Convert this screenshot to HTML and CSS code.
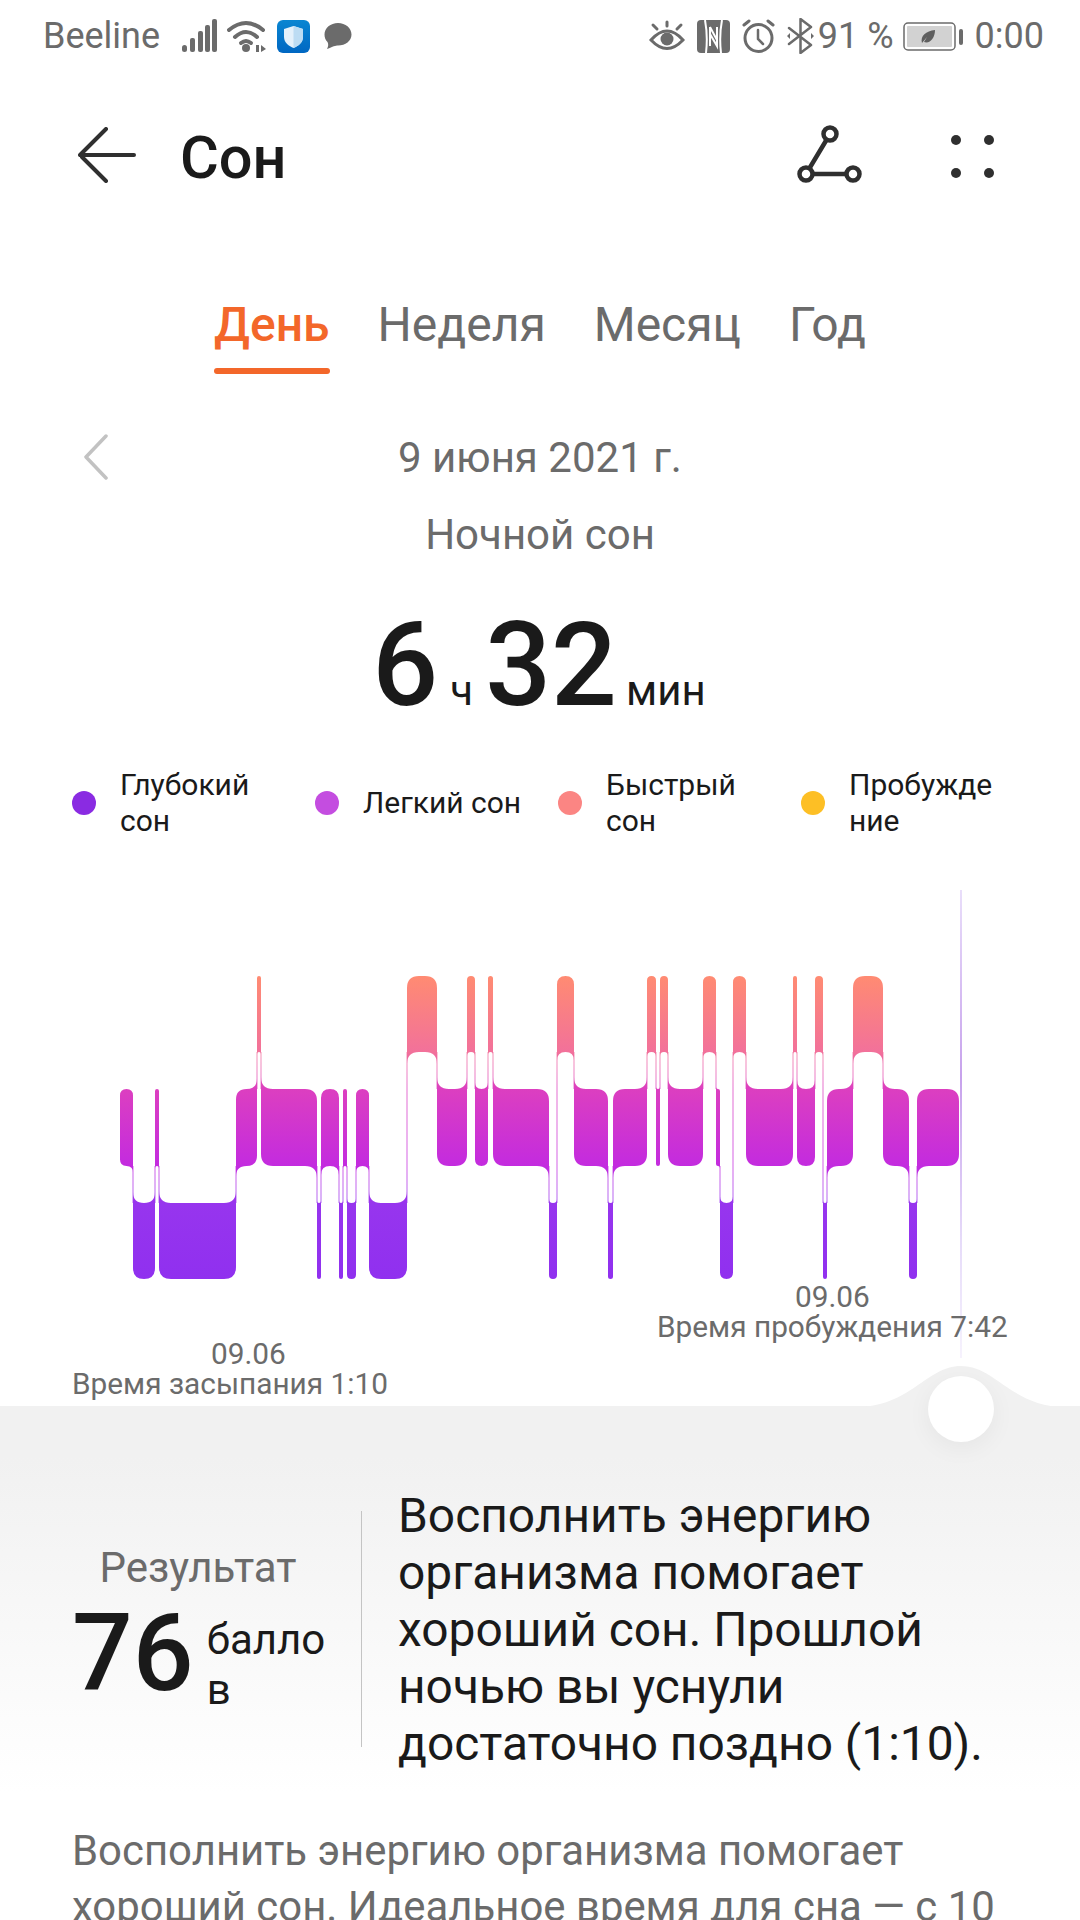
FILE: index.html
```html
<!DOCTYPE html>
<html lang="ru">
<head>
    <meta charset="UTF-8">
    <meta name="viewport" content="width=device-width, initial-scale=1.0">
    <title>Сон</title>
    <link rel="stylesheet" href="styles.css">
</head>
<body>
    <div class="statusbar">
        <div class="status-left">
            <span class="carrier">Beeline</span>
            <svg class="st-signal" width="36" height="34" viewBox="0 0 36 34">
                <g fill="#6b6b6b">
                    <rect x="1" y="26" width="5" height="7" rx="2.5"/>
                    <rect x="9" y="19" width="5" height="14" rx="2"/>
                    <rect x="17" y="12" width="5" height="21" rx="2"/>
                    <rect x="24" y="6" width="5" height="27" rx="2"/>
                    <rect x="31" y="0" width="5" height="33" rx="2"/>
                </g>
            </svg>
            <svg class="st-wifi" width="40" height="34" viewBox="0 0 40 34">
                <g fill="none" stroke="#6b6b6b" stroke-width="4" stroke-linecap="round">
                    <path d="M2 11 Q19 -3 36 11"/>
                    <path d="M8 18 Q19 8 30 18"/>
                    <path d="M14 24 Q19 20 24 24"/>
                </g>
                <circle cx="19" cy="29" r="4" fill="#6b6b6b"/>
                <path d="M29 33V26H32V33ZM34 26L39 30L34 33Z" fill="#6b6b6b"/>
            </svg>
            <svg class="st-shield" width="33" height="33" viewBox="0 0 33 33">
                <defs>
                    <linearGradient id="shieldBg" x1="0" y1="0" x2="0" y2="1">
                        <stop offset="0" stop-color="#0a86d2"/>
                        <stop offset="1" stop-color="#0067c2"/>
                    </linearGradient>
                </defs>
                <rect width="33" height="33" rx="6" fill="url(#shieldBg)"/>
                <path d="M16.5 6L26 9V17C26 23 21 26 16.5 28C12 26 7 23 7 17V9Z" fill="#e4f1fb"/>
                <path d="M16.5 6L26 9V17C26 23 21 26 16.5 28Z" fill="#bcdcf3"/>
            </svg>
            <svg class="st-bubble" width="28" height="28" viewBox="0 0 28 28">
                <path d="M14 1C21.500 1 27.500 6 27.500 12.500C27.500 19 21.500 23.500 14 23.500C11.500 23.500 9 24.500 3 27C4.500 24 4.500 22 3.500 20C1.500 18 .5 15.500 .5 12.500C.5 6 6.500 1 14 1Z" fill="#6b6b6b"/>
            </svg>
        </div>
        <div class="status-right">
            <svg width="36" height="32" viewBox="0 0 36 32">
                <g fill="none" stroke="#6b6b6b" stroke-width="3" stroke-linecap="round">
                    <path d="M2 20Q18 2 34 20Q18 37 2 20Z"/>
                    <path d="M18 2V6M4 5L8 9M32 5L28 9"/>
                </g>
                <circle cx="18" cy="19" r="6.500" fill="#6b6b6b"/>
            </svg>
            <svg class="st-nfc" width="33" height="33" viewBox="0 0 33 33">
                <rect width="33" height="33" rx="4" fill="#6b6b6b"/>
                <g fill="none" stroke="#fff" stroke-width="2">
                    <path d="M8 0Q11 16 9 33"/>
                    <path d="M25 0Q22 16 24 33"/>
                    <path d="M13 7V26M13 7L20 20M20 7V26L13 14"/>
                </g>
            </svg>
            <svg class="st-alarm" width="33" height="34" viewBox="0 0 33 34">
                <g fill="none" stroke="#6b6b6b" stroke-width="3" stroke-linecap="round">
                    <circle cx="16.500" cy="19" r="13.500"/>
                    <path d="M2 6L7 2M31 6L26 2"/>
                    <path d="M16 11V20L21 25" stroke-width="2.500"/>
                </g>
            </svg>
            <svg class="st-bt" width="27" height="36" viewBox="0 0 27 36">
                <path d="M2 10L24 27L13.500 35V1L24 9L2 26" fill="none" stroke="#6b6b6b" stroke-width="2.500" stroke-linejoin="round" stroke-linecap="round"/>
                <path d="M0 18L3 15V21ZM27 18L24 15V21Z" fill="#6b6b6b"/>
            </svg>
            <span class="battery-pct">91 %</span>
            <svg class="st-battery" width="60" height="29" viewBox="0 0 60 29">
                <rect x="1" y="1" width="51" height="27" rx="4" fill="#fff" stroke="#6b6b6b" stroke-width="1.500"/>
                <rect x="4" y="4" width="45" height="21" rx="1" fill="#d2d2d2"/>
                <path d="M19 21C17 14 23 9 32 8C32 16 27 22 21 20L24 15Z" fill="#5f5f5f"/>
                <rect x="56" y="7" width="4" height="16" rx="2" fill="#6b6b6b"/>
            </svg>
            <span class="clock">0:00</span>
        </div>
    </div>

    <div class="topnav">
        <div class="topnav-left">
            <svg class="back-icon" width="60" height="56" viewBox="0 0 60 56">
                <path d="M28 2L2 28H56M4 30L28 54" fill="none" stroke="#2f2f2f" stroke-width="4" stroke-linecap="round" stroke-linejoin="round"/>
            </svg>
            <h1 class="page-title">Сон</h1>
        </div>
        <div class="topnav-right">
            <svg class="share-icon" width="66" height="60" viewBox="0 0 66 60">
                <g fill="#fff" stroke="#2f2f2f" stroke-width="4.500">
                    <path d="M33 9L9 49H56" fill="none"/>
                    <circle cx="33" cy="9" r="6.500"/>
                    <circle cx="9" cy="49" r="6.500"/>
                    <circle cx="56" cy="49" r="6.500"/>
                </g>
            </svg>
            <svg class="more-icon" width="44" height="44" viewBox="0 0 44 44">
                <g fill="#2f2f2f">
                    <circle cx="5" cy="5" r="5"/>
                    <circle cx="38" cy="5" r="5"/>
                    <circle cx="5" cy="38" r="5"/>
                    <circle cx="38" cy="38" r="5"/>
                </g>
            </svg>
        </div>
    </div>

    <div class="tabs">
        <span class="tab active">День</span>
        <span class="tab">Неделя</span>
        <span class="tab">Месяц</span>
        <span class="tab">Год</span>
    </div>

    <div class="date-row">
        <svg class="prev-icon" width="26" height="46" viewBox="0 0 26 46">
            <path d="M23 2L3 23L23 44" fill="none" stroke="#c2c2c2" stroke-width="3.500" stroke-linecap="round" stroke-linejoin="round"/>
        </svg>
        <span class="date-text">9 июня 2021 г.</span>
    </div>
    <div class="sleep-type">Ночной сон</div>

    <div class="duration">
        <span class="big-num">6</span><span class="unit">ч</span><span class="big-num">32</span><span class="unit unit-last">мин</span>
    </div>

    <div class="legend">
        <div class="legend-item"><i class="dot dot-deep"></i><span>Глубокий<br>сон</span></div>
        <div class="legend-item"><i class="dot dot-light"></i><span>Легкий сон</span></div>
        <div class="legend-item"><i class="dot dot-rem"></i><span>Быстрый<br>сон</span></div>
        <div class="legend-item"><i class="dot dot-awake"></i><span>Пробужде<br>ние</span></div>
    </div>

    <div class="chart">
        <svg id="sleepChart" width="1080" height="526" viewBox="0 880 1080 526">
            <defs>
                <linearGradient id="stages" gradientUnits="userSpaceOnUse" x1="0" y1="976" x2="0" y2="1279">
                    <stop offset="0" stop-color="#ff8b72"/>
                    <stop offset="0.25" stop-color="#f2719a"/>
                    <stop offset="0.373" stop-color="#dc3fc0"/>
                    <stop offset="0.627" stop-color="#c32bdf"/>
                    <stop offset="0.749" stop-color="#9735ee"/>
                    <stop offset="1" stop-color="#9030ef"/>
                </linearGradient>
                <linearGradient id="cursor" gradientUnits="userSpaceOnUse" x1="0" y1="890" x2="0" y2="1358">
                    <stop offset="0" stop-color="#e9defa"/>
                    <stop offset="0.4" stop-color="#c7a2ec"/>
                    <stop offset="0.75" stop-color="#e6dbf9"/>
                    <stop offset="1" stop-color="#f6f2fd"/>
                </linearGradient>
            </defs>
            <rect x="960" y="890" width="2" height="468" fill="url(#cursor)"/>
        </svg>
        <div class="chart-label label-start">09.06<br>Время засыпания 1:10</div>
        <div class="chart-label label-end">09.06<br>Время пробуждения 7:42</div>
    </div>

    <div class="panel">
        <svg class="panel-bump" width="210" height="41" viewBox="0 0 210 41">
            <path d="M0 41C55 41 70 0 105 0C140 0 155 41 210 41Z" fill="#f1f1f1"/>
        </svg>
        <div class="panel-knob"></div>

        <div class="score-row">
            <div class="score">
                <div class="score-label">Результат</div>
                <div class="score-value">
                    <span class="score-num">76</span>
                    <span class="score-unit">балло<br>в</span>
                </div>
            </div>
            <div class="score-divider"></div>
            <p class="score-text">Восполнить энергию организма помогает хороший сон. Прошлой ночью вы уснули достаточно поздно (1:10).</p>
        </div>

        <p class="advice">Восполнить энергию организма помогает хороший сон. Идеальное время для сна — с 10</p>
    </div>

    <script src="chart.js"></script>
</body>
</html>
```

FILE: styles.css
```css
* {
    margin: 0;
    padding: 0;
    box-sizing: border-box;
}

html, body {
    width: 1080px;
    height: 1920px;
    overflow: hidden;
}

body {
    background-color: #ffffff;
    font-family: Roboto, "Noto Sans", sans-serif;
    color: #1a1a1a;
}

/* Status bar */
.statusbar {
    height: 72px;
    display: flex;
    justify-content: space-between;
    align-items: center;
    padding: 0 36px 0 43px;
    color: #6b6b6b;
    font-size: 36px;
}

.status-left,
.status-right {
    display: flex;
    align-items: center;
}

.status-left svg,
.status-right svg {
    display: block;
}

.carrier {
    margin-right: 21px;
}

.st-wifi,
.st-shield {
    margin-left: 10px;
}

.st-bubble {
    margin-left: 14px;
}

.st-nfc,
.st-alarm,
.st-bt {
    margin-left: 12px;
}

.battery-pct {
    margin-left: 4px;
    margin-right: 9px;
}

.clock {
    margin-left: 12px;
}

/* Top navigation */
.topnav {
    height: 166px;
    display: flex;
    justify-content: space-between;
    align-items: center;
    padding: 0 85px 0 78px;
}

.topnav-left,
.topnav-right {
    display: flex;
    align-items: center;
}

.page-title {
    font-size: 59.5px;
    font-weight: 500;
    margin: 6px 0 0 42px;
}

.more-icon {
    margin: 4px 0 0 88px;
}

/* Tabs */
.tabs {
    display: flex;
    justify-content: center;
    gap: 48px;
    margin-top: 57px;
    height: 79px;
    font-size: 48px;
    color: #6b6b6b;
}

.tab {
    line-height: 60px;
}

.tab.active {
    color: #f3672a;
    font-weight: 500;
}

.tab.active::after {
    content: "";
    display: block;
    height: 6px;
    margin-top: 13px;
    border-radius: 3px;
    background: #f3672a;
}

/* Date */
.date-row {
    display: grid;
    grid-template-columns: 1fr auto 1fr;
    align-items: center;
    height: 60px;
    margin-top: 53px;
    font-size: 42px;
    color: #6b6b6b;
}

.prev-icon {
    margin-left: 83px;
}

.date-text {
    grid-column: 2;
}

.sleep-type {
    height: 60px;
    margin-top: 18px;
    line-height: 60px;
    text-align: center;
    font-size: 42px;
    color: #6b6b6b;
}

.duration {
    display: flex;
    justify-content: center;
    align-items: baseline;
    height: 140px;
    line-height: 140px;
    margin-top: 30px;
    padding-left: 10px;
}

.big-num {
    font-size: 116px;
    font-weight: 500;
}

.unit {
    font-size: 42px;
    margin: 0 12px;
}

.unit-last {
    margin-left: 9px;
}

/* Legend */
.legend {
    display: flex;
    padding-left: 72px;
    margin-top: 32px;
    font-size: 30px;
    line-height: 36px;
}

.legend-item {
    width: 243px;
    height: 72px;
    display: flex;
    align-items: center;
    gap: 24px;
}

.dot {
    flex: none;
    width: 24px;
    height: 24px;
    border-radius: 50%;
}

.dot-deep {
    background: #8a2be2;
}

.dot-light {
    background: #c44de0;
}

.dot-rem {
    background: #fb8583;
}

.dot-awake {
    background: #fdbf25;
}

/* Chart */
.chart {
    position: relative;
    height: 526px;
    margin-top: 41px;
}

.chart svg {
    display: block;
}

.chart-label {
    position: absolute;
    font-size: 29.8px;
    line-height: 30px;
    color: #6b6b6b;
    text-align: center;
    white-space: nowrap;
}

.label-start {
    left: 72px;
    top: 459px;
    width: 314px;
    text-align: left;
    text-indent: 139px;
}

.label-end {
    left: 657px;
    top: 402px;
}

/* Score panel */
.panel {
    position: relative;
    height: 514px;
    padding: 0 0 0 72px;
    background: linear-gradient(#f1f1f1 10%, #ffffff 75%);
}

.panel-bump {
    position: absolute;
    left: 856px;
    top: -40px;
}

.panel-knob {
    position: absolute;
    left: 928px;
    top: -30px;
    width: 66px;
    height: 66px;
    border-radius: 50%;
    background: #ffffff;
    box-shadow: 0 6px 24px rgba(0, 0, 0, 0.05);
}

.score-row {
    display: flex;
    padding-top: 82px;
}

.score {
    width: 289px;
    padding-top: 55px;
}

.score-label {
    width: 252px;
    text-align: center;
    font-size: 42px;
    line-height: 50px;
    color: #6b6b6b;
}

.score-value {
    display: flex;
    align-items: center;
}

.score-num {
    font-size: 107px;
    font-weight: 500;
    line-height: 120px;
    margin-right: 13px;
}

.score-unit {
    font-size: 42px;
    line-height: 50px;
    margin-top: 22px;
}

.score-divider {
    width: 1px;
    height: 236px;
    margin-top: 23px;
    background: #c4c4c4;
}

.score-text {
    width: 630px;
    margin-left: 36px;
    font-size: 47.9px;
    line-height: 57px;
}

.advice {
    margin-top: 50px;
    width: 960px;
    font-size: 41.9px;
    line-height: 56px;
    color: #6b6b6b;
}
```

FILE: chart.js
```js
// Sleep stages: [start x, end x, level] in chart coordinates
const levels = {
    rem: [976, 1052],
    light: [1089, 1166],
    deep: [1203, 1279]
};

const R = 'rem', L = 'light', D = 'deep';

const segments = [
    [120, 133, L], [133, 155, D], [155, 159, L], [159, 236, D], [236, 257, L],
    [257, 261, R], [261, 317, L], [317, 321, D], [321, 339, L], [339, 343, D],
    [343, 347, L], [347, 356, D], [356, 369, L], [369, 407, D], [407, 437, R],
    [437, 467, L], [467, 475, R], [475, 488, L], [488, 493, R], [493, 549, L],
    [549, 557, D], [557, 574, R], [574, 608, L], [608, 613, D], [613, 647, L],
    [647, 656, R], [656, 660, L], [660, 668, R], [668, 703, L], [703, 716, R],
    [716, 720, L], [720, 733, D], [733, 746, R], [746, 793, L], [793, 797, R],
    [797, 815, L], [815, 823, R], [823, 827, D], [827, 853, L], [853, 883, R],
    [883, 909, L], [909, 917, D], [917, 959, L]
];

const svg = document.getElementById('sleepChart');
const SVG_NS = 'http://www.w3.org/2000/svg';

function isHigher(a, b) {
    return levels[a][0] < levels[b][0];
}

function segmentPath(seg, prev, next) {
    const [x0, x1, level] = seg;
    const [top, bottom] = levels[level];
    const r = Math.min(12, (x1 - x0) / 2);

    // a corner flares out towards a neighbour on that side, otherwise it is rounded in
    const topLeft = prev && isHigher(prev[2], level) ? top - r : top + r;
    const topRight = next && isHigher(next[2], level) ? top - r : top + r;
    const bottomRight = next && isHigher(level, next[2]) ? bottom + r : bottom - r;
    const bottomLeft = prev && isHigher(level, prev[2]) ? bottom + r : bottom - r;

    return `M${x0} ${topLeft}Q${x0} ${top} ${x0 + r} ${top}` +
        `L${x1 - r} ${top}Q${x1} ${top} ${x1} ${topRight}` +
        `L${x1} ${bottomRight}Q${x1} ${bottom} ${x1 - r} ${bottom}` +
        `L${x0 + r} ${bottom}Q${x0} ${bottom} ${x0} ${bottomLeft}Z`;
}

segments.forEach((seg, i) => {
    const prev = segments[i - 1];
    const next = segments[i + 1];

    // thin line that joins this stage to the next one
    if (next) {
        const x = seg[1];
        const upper = isHigher(seg[2], next[2]) ? seg[2] : next[2];
        const lower = upper === seg[2] ? next[2] : seg[2];
        const line = document.createElementNS(SVG_NS, 'rect');
        line.setAttribute('x', x - 0.75);
        line.setAttribute('y', levels[upper][1]);
        line.setAttribute('width', 1.5);
        line.setAttribute('height', levels[lower][0] - levels[upper][1]);
        line.setAttribute('fill', 'url(#stages)');
        line.setAttribute('opacity', '0.5');
        svg.appendChild(line);
    }

    const path = document.createElementNS(SVG_NS, 'path');
    path.setAttribute('d', segmentPath(seg, prev, next));
    path.setAttribute('fill', 'url(#stages)');
    svg.appendChild(path);
});
```
